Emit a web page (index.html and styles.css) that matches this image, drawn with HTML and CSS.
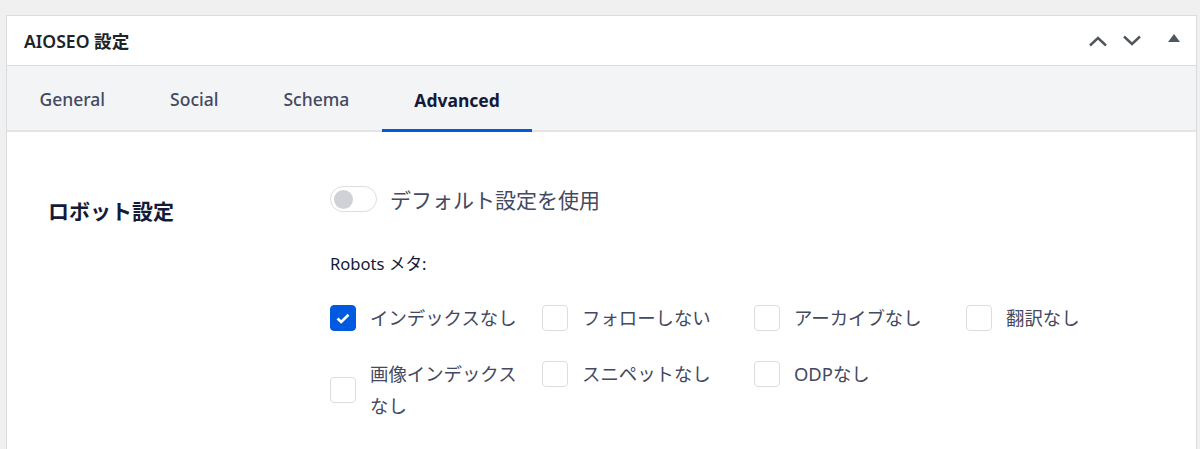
FILE: index.html
```html
<!DOCTYPE html>
<html lang="ja">
<head>
    <meta charset="UTF-8">
    <meta name="viewport" content="width=device-width, initial-scale=1.0">
    <title>AIOSEO 設定</title>
    <link rel="stylesheet" href="styles.css">
</head>
<body>
    <div class="postbox">
        <!-- Metabox header -->
        <div class="postbox-header">
            <h2 class="postbox-title">AIOSEO 設定</h2>
            <div class="postbox-actions">
                <button type="button" class="handle-btn" aria-label="上へ移動">
                    <svg width="20" height="12" viewBox="0 0 20 12"><path d="M2 10.5 L10 3 L18 10.5" fill="none" stroke="#50575e" stroke-width="2.4"/></svg>
                </button>
                <button type="button" class="handle-btn" aria-label="下へ移動">
                    <svg width="20" height="12" viewBox="0 0 20 12"><path d="M2 1.5 L10 9 L18 1.5" fill="none" stroke="#50575e" stroke-width="2.4"/></svg>
                </button>
                <button type="button" class="handle-btn toggle-btn" aria-label="パネルを切り替え">
                    <svg width="12" height="8" viewBox="0 0 12 8"><path d="M6 0 L12 8 L0 8 Z" fill="#50575e"/></svg>
                </button>
            </div>
        </div>

        <!-- Tabs -->
        <div class="tabs">
            <div class="tab">General</div>
            <div class="tab">Social</div>
            <div class="tab">Schema</div>
            <div class="tab active">Advanced</div>
        </div>

        <!-- Robots settings -->
        <div class="settings-row">
            <div class="settings-label">ロボット設定</div>
            <div class="settings-field">
                <div class="toggle-row">
                    <span class="switch"><span class="knob"></span></span>
                    <span class="toggle-text">デフォルト設定を使用</span>
                </div>

                <div class="meta-label">Robots メタ:</div>

                <div class="check-grid">
                    <label class="check-item"><span class="box checked"><svg width="14" height="11" viewBox="0 0 14 11"><path d="M1.5 5.5 L5.2 9 L12.5 1.8" fill="none" stroke="#fff" stroke-width="2.6"/></svg></span><span class="check-text">インデックスなし</span></label>
                    <label class="check-item"><span class="box"></span><span class="check-text">フォローしない</span></label>
                    <label class="check-item"><span class="box"></span><span class="check-text">アーカイブなし</span></label>
                    <label class="check-item"><span class="box"></span><span class="check-text">翻訳なし</span></label>
                    <label class="check-item"><span class="box"></span><span class="check-text">画像インデックスなし</span></label>
                    <label class="check-item"><span class="box"></span><span class="check-text">スニペットなし</span></label>
                    <label class="check-item"><span class="box"></span><span class="check-text">ODPなし</span></label>
                </div>
            </div>
        </div>
    </div>
</body>
</html>
```

FILE: styles.css
```css
body {
    margin: 0;
    background-color: #f0f0f1;
    font-family: "Noto Sans", "Noto Sans CJK JP", sans-serif;
    color: #434960;
}
.postbox {
    margin: 15px 3px 0 6px;
    background: #fff;
    border: 1px solid #dcdcde;
    border-bottom: none;
    height: 460px;
}

/* Header */
.postbox-header {
    display: flex;
    align-items: center;
    justify-content: space-between;
    height: 49px;
    border-bottom: 1px solid #dcdcde;
}
.postbox-title {
    margin: 0;
    padding-left: 17px;
    font-size: 17.6px;
    font-weight: 600;
    color: #1d2327;
}
.postbox-actions {
    display: flex;
    align-items: center;
    padding-right: 5px;
}
.handle-btn {
    display: flex;
    align-items: center;
    justify-content: center;
    width: 34px;
    height: 36px;
    padding: 0;
    border: none;
    background: none;
}
.toggle-btn {
    margin-left: 8px;
    padding-bottom: 5px;
}

/* Tabs */
.tabs {
    display: flex;
    height: 64px;
    background: #f3f4f5;
    border-bottom: 2px solid #e2e4e7;
}
.tab {
    display: flex;
    align-items: center;
    padding: 1px 32.5px 0;
    font-size: 17.5px;
    font-weight: 500;
    color: #434960;
}
.tab.active {
    font-weight: 700;
    color: #141b38;
    box-shadow: inset 0 -3px 0 #005ae0;
    margin-bottom: -2px;
}

/* Settings */
.settings-row {
    display: flex;
    padding: 54px 0 0 41px;
}
.settings-label {
    width: 282px;
    flex-shrink: 0;
    padding-top: 9px;
    font-size: 21px;
    font-weight: 700;
    color: #141b38;
}
.toggle-row {
    display: flex;
    align-items: center;
    gap: 13px;
    height: 26px;
}
.switch {
    display: flex;
    align-items: center;
    box-sizing: border-box;
    width: 47px;
    height: 26px;
    padding-left: 3px;
    border: 1px solid #dcdde1;
    border-radius: 13px;
    background: #fff;
}
.knob {
    width: 19px;
    height: 19px;
    border-radius: 50%;
    background: #d0d1d7;
}
.toggle-text {
    font-size: 21px;
}
.meta-label {
    margin-top: 40px;
    font-size: 16.6px;
    line-height: 24px;
    color: #141b38;
}
.check-grid {
    display: grid;
    grid-template-columns: repeat(4, 212px);
    row-gap: 24px;
    margin-top: 26px;
    align-items: start;
}
.check-item {
    display: flex;
    align-items: center;
    gap: 14px;
    padding-right: 22px;
}
.box {
    display: flex;
    align-items: center;
    justify-content: center;
    flex-shrink: 0;
    box-sizing: border-box;
    width: 26px;
    height: 26px;
    border: 1px solid #dcdde1;
    border-radius: 4px;
    background: #fff;
}
.box.checked {
    border-color: #005ae0;
    background: #005ae0;
}
.check-text {
    font-size: 18.4px;
    line-height: 32px;
}
```
